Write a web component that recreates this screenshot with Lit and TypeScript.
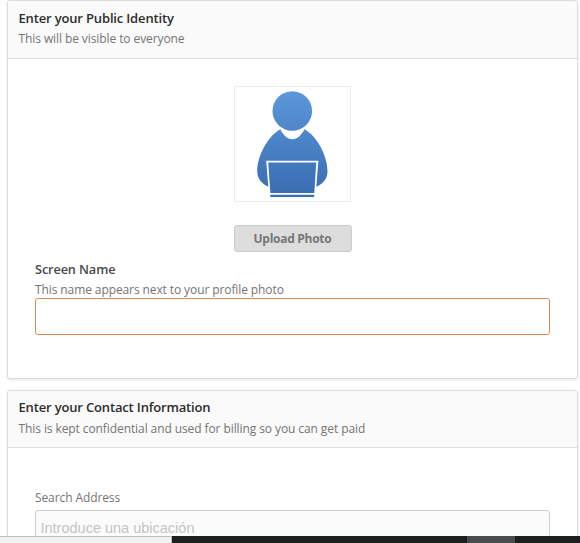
import { LitElement, html, css } from "lit";
import { customElement, property } from "lit/decorators.js";

@customElement("form-card")
class FormCard extends LitElement {
  @property() heading = "";
  @property() hint = "";

  static styles = css`
    :host {
      display: block;
      box-sizing: border-box;
      border: 1px solid #dcdcdc;
      border-radius: 3px;
      background: #fff;
      box-shadow: 0 1px 3px rgba(0, 0, 0, 0.1);
    }
    header {
      box-sizing: border-box;
      height: var(--header-height, 58px);
      padding: var(--header-top, 7px) 11px 0 10.5px;
      background: #fafafa;
      border-bottom: 1px solid #dedede;
      border-radius: 2px 2px 0 0;
    }
    h2 {
      margin: 0 0 var(--heading-gap, 1px);
      font-size: 13px;
      line-height: 20px;
      font-weight: 600;
      letter-spacing: -0.16px;
      color: #2c2c2c;
    }
    p {
      margin: 0;
      font-size: 12px;
      line-height: 20px;
      letter-spacing: -0.09px;
      color: #747474;
    }
  `;

  render() {
    return html`
      <header>
        <h2>${this.heading}</h2>
        <p>${this.hint}</p>
      </header>
      <slot></slot>
    `;
  }
}

@customElement("app-root")
class AppRoot extends LitElement {
  static styles = css`
    :host {
      display: flex;
      flex-direction: column;
      position: relative;
      box-sizing: border-box;
      width: 580px;
      height: 543px;
      padding: 0 2px 0 7px;
      gap: 11px;
      overflow: hidden;
      background: #fff;
      font-family: "Open Sans", "Noto Sans", sans-serif;
    }
    form-card {
      flex: none;
    }
    .identity {
      height: 379px;
    }
    .contact {
      --header-height: 57px;
      --header-top: 6px;
      --heading-gap: 2px;
      height: 220px;
    }
    .body {
      display: flex;
      flex-direction: column;
      padding: 27px 27px 0;
    }
    .avatar {
      align-self: center;
      box-sizing: border-box;
      width: 117px;
      height: 116px;
      border: 1px solid #ececec;
      background: #fff;
    }
    .avatar svg {
      display: block;
    }
    button {
      align-self: center;
      box-sizing: border-box;
      width: 118px;
      height: 27px;
      margin: 23px 0 7px;
      padding: 0;
      border: 1px solid #cbcbcb;
      border-radius: 3px;
      background: #dddddd;
      color: #777;
      font: 700 12px/25px "Open Sans", sans-serif;
      letter-spacing: -0.28px;
    }
    .label {
      font-size: 12.7px;
      line-height: 20px;
      font-weight: 600;
      letter-spacing: -0.1px;
      color: #484848;
    }
    .note {
      font-size: 12px;
      line-height: 20px;
      letter-spacing: -0.1px;
      color: #747474;
    }
    .label + .note {
      padding-top: 1px;
    }
    input {
      box-sizing: border-box;
      width: 515px;
      height: 37px;
      padding: 0 5px;
      border: 1px solid #d98a52;
      border-radius: 3px;
      background: #fff;
      outline: none;
      font: 14.5px "Liberation Sans", sans-serif;
    }
    .name {
      margin-top: -2px;
    }
    .contact .body {
      padding-top: 40px;
    }
    .address {
      height: 35px;
      margin-top: 2px;
      padding: 0 4.5px;
      border-color: #cfcfcf;
      background: #fbfbfb;
    }
    .address::placeholder {
      color: #c4c4c4;
      opacity: 1;
    }
    .taskbar {
      position: absolute;
      left: 0;
      right: 0;
      bottom: 0;
      height: 7px;
      display: flex;
      background: #1d1f1f;
    }
    .status {
      box-sizing: border-box;
      width: 172px;
      border-top: 1px solid #bcbcbc;
      border-right: 1px solid #bcbcbc;
      background: #f1f1f1;
    }
    .task {
      width: 48px;
      margin-left: 295px;
      background: #4a4b4c;
    }
  `;

  render() {
    return html`
      <form-card class="identity" heading="Enter your Public Identity" hint="This will be visible to everyone">
        <div class="body">
          <div class="avatar">
            <svg width="115" height="114" viewBox="0 0 115 114">
              <defs>
                <linearGradient id="blue" gradientUnits="userSpaceOnUse" x1="0" y1="4" x2="0" y2="110">
                  <stop offset="0" stop-color="#5b97da" />
                  <stop offset="1" stop-color="#386db0" />
                </linearGradient>
              </defs>
              <circle cx="57.3" cy="24" r="19.8" fill="url(#blue)" />
              <path
                fill="url(#blue)"
                d="M45.2 42.2C48 46.5 51 52.3 57.3 52.3S66.7 46.5 69.6 42.2C82 49 92.5 69 92.5 84C92.5 91.5 88.5 96.5 81.3 99.7L83.4 73.8H31.2L33.3 99.7C26.5 96.5 22.2 91.5 22.2 84C22.2 69 33 49 45.2 42.2Z"
              />
              <path fill="url(#blue)" d="M33.2 75.6H81.2L79.3 106H35.4Z" />
              <path fill="url(#blue)" d="M35.3 107.8H79.2V110H35.3Z" />
            </svg>
          </div>
          <button>Upload Photo</button>
          <div class="label">Screen Name</div>
          <div class="note">This name appears next to your profile photo</div>
          <input class="name" aria-label="Screen Name" />
        </div>
      </form-card>
      <form-card
        class="contact"
        heading="Enter your Contact Information"
        hint="This is kept confidential and used for billing so you can get paid"
      >
        <div class="body">
          <div class="note">Search Address</div>
          <input class="address" aria-label="Search Address" placeholder="Introduce una ubicación" />
        </div>
      </form-card>
      <div class="taskbar">
        <div class="status"></div>
        <div class="task"></div>
      </div>
    `;
  }
}
